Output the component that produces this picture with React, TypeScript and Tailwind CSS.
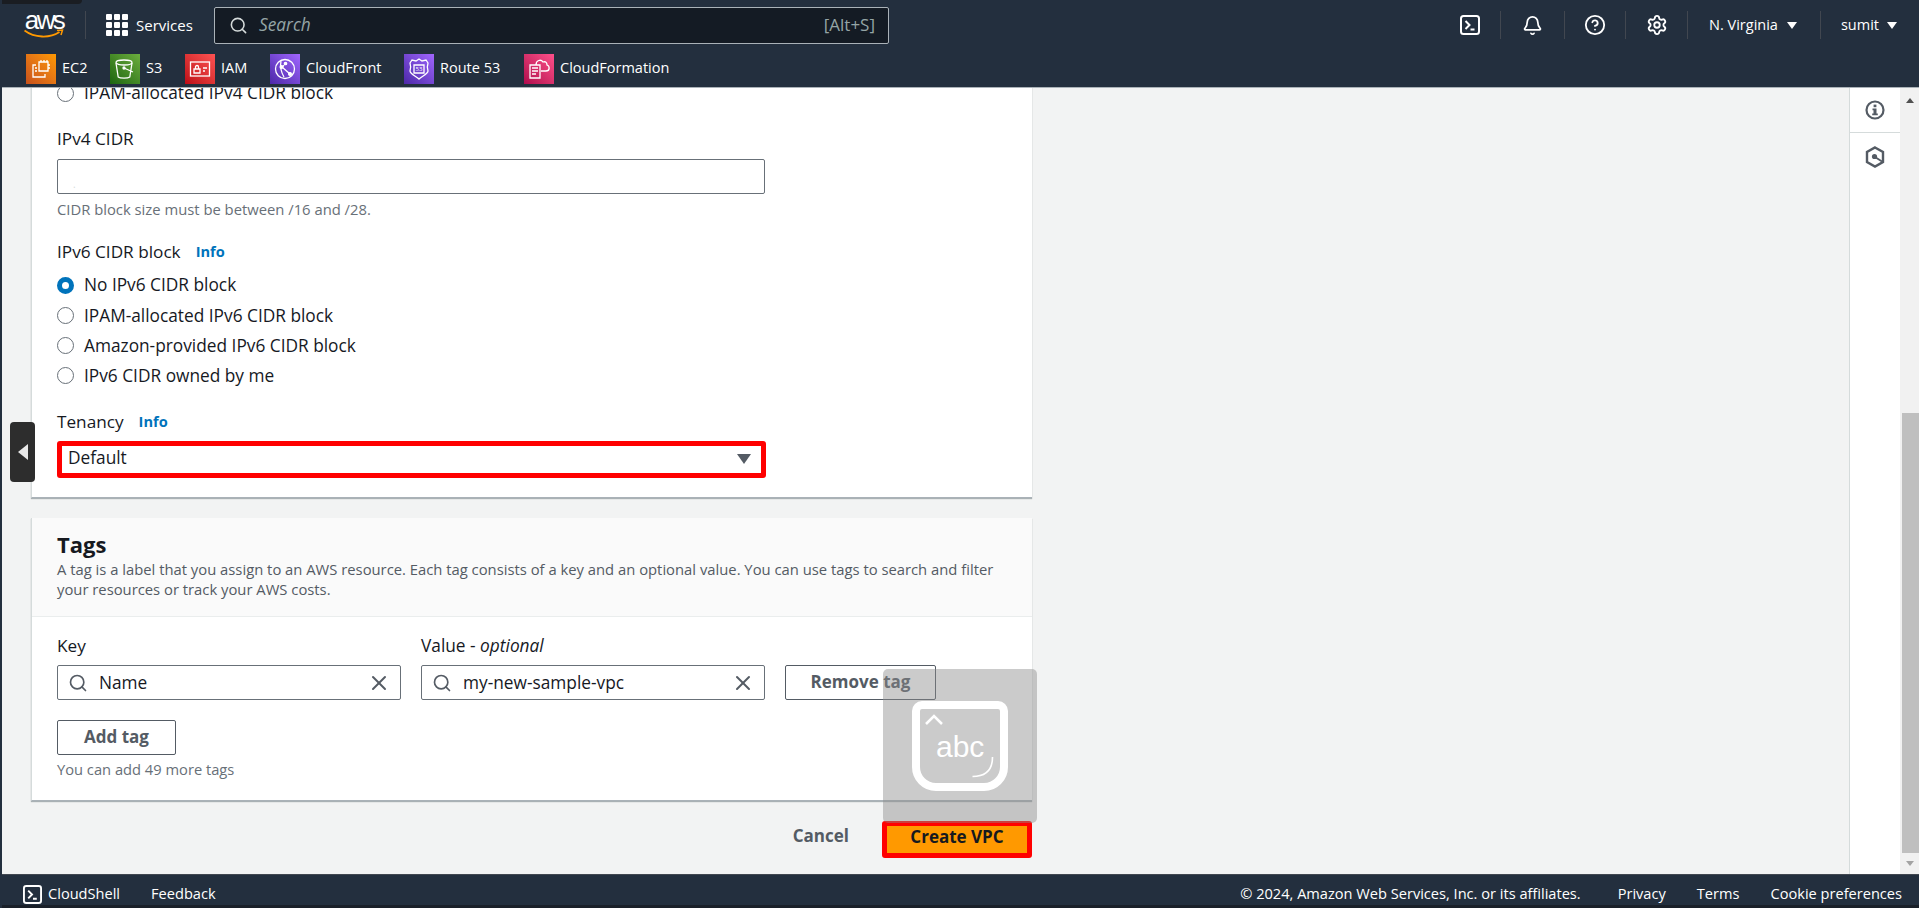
import { Bell, CircleHelp, Search, Settings, X } from 'lucide-react';

const font = 'font-["Open_Sans","Noto_Sans",sans-serif]';

function TerminalIcon({ size = 20 }: { size?: number }) {
  return (
    <svg width={size} height={size} viewBox="0 0 20 20" fill="none" stroke="white" strokeWidth="2">
      <rect x="1" y="1" width="18" height="18" rx="2.5" />
      <path d="M5.5 6l4 4-4 4M10.5 14.5h4" />
    </svg>
  );
}

function AwsLogo() {
  return (
    <div className="flex flex-col items-center w-[38px] h-[26px]">
      <span className="text-white text-[26px] leading-[17px] font-['Liberation_Sans',sans-serif] tracking-[-2.6px]">aws</span>
      <svg width="40" height="9" viewBox="0 0 40 9" fill="none" className="shrink-0">
        <path d="M0.5 1.5c10 7.5 25 8 35 1.5" stroke="#ff9900" strokeWidth="1.8" />
        <path d="M33 1.5l5.5-.5-1.5 5" stroke="#ff9900" strokeWidth="1.5" />
      </svg>
    </div>
  );
}

function Shortcut({ label, tile, width, children }: { label: string; tile: string; width: string; children: React.ReactNode }) {
  return (
    <div className={`flex items-center gap-[6px] ${width}`}>
      <div className={`w-[30px] h-[30px] flex items-center justify-center shrink-0 ${tile}`}>
        <svg width="24" height="24" viewBox="0 0 24 24" fill="none" stroke="white" strokeWidth="1.3">
          {children}
        </svg>
      </div>
      <span className="text-white text-[14.5px] leading-[20px] mt-[-2px]">{label}</span>
    </div>
  );
}

function NavDivider() {
  return <div className="w-px h-[28px] bg-[#414750] shrink-0" />;
}

function Caret() {
  return <div className="w-0 h-0 border-x-[5px] border-x-transparent border-t-[7px] border-t-white" />;
}

function TopNav() {
  return (
    <header className="bg-[#232f3e] h-[88px] shrink-0 border-b border-[#aab2b8] relative">
      <div className="absolute left-0 top-0 w-[80px] h-[4px] bg-[#1a1d22] rounded-br" />
      <div className="flex items-center h-[50px] pl-[23px] pr-[22px]">
        <AwsLogo />
        <div className="w-[22px]" />
        <NavDivider />
        <div className="grid grid-cols-3 gap-[2px] ml-[20px]">
          {Array.from({ length: 9 }).map((_, i) => (
            <div key={i} className="w-[6px] h-[6px] bg-white rounded-[1px]" />
          ))}
        </div>
        <span className="text-white text-[15px] ml-[8px] w-[57px]">Services</span>
        <div className="ml-[21px] w-[675px] h-[37px] bg-[#141b24] border border-[#aab2b8] rounded-[2px] flex items-center pl-[14px] pr-[13px]">
          <Search size={19} color="#d5dbdb" strokeWidth={2} />
          <span className="italic text-[#95a5a6] text-[17.3px] ml-[11px]">Search</span>
          <span className="ml-auto text-[#95a5a6] text-[17px]">[Alt+S]</span>
        </div>
        <div className="ml-auto flex items-center">
          <TerminalIcon />
          <div className="w-[20px]" />
          <NavDivider />
          <div className="w-[63px] flex justify-center"><Bell size={21} color="white" strokeWidth={2} /></div>
          <NavDivider />
          <div className="w-[60px] flex justify-center"><CircleHelp size={22} color="white" strokeWidth={2} /></div>
          <NavDivider />
          <div className="w-[61px] flex justify-center"><Settings size={22} color="white" strokeWidth={2} /></div>
          <NavDivider />
          <span className="text-white text-[14.5px] ml-[21px]">N. Virginia</span>
          <div className="ml-[9px]"><Caret /></div>
          <div className="w-[23px]" />
          <NavDivider />
          <span className="text-white text-[14.5px] ml-[20px]">sumit</span>
          <div className="ml-[8px]"><Caret /></div>
        </div>
      </div>
      <div className="flex items-center h-[30px] mt-[4px] pl-[24px]">
        <Shortcut label="EC2" width="w-[84px]" tile="bg-gradient-to-tr from-[#c8511b] to-[#ff9900]">
          <path d="M10 5h9v9h-9z" />
          <path d="M12 3v2M15 3v2M18 3v2M19 8h2M19 11h2M7 8H4v12h12v-3" />
          <path d="M8 11H6M8 14H6" />
        </Shortcut>
        <Shortcut label="S3" width="w-[75px]" tile="bg-gradient-to-tr from-[#1b660f] to-[#6cae3e]">
          <ellipse cx="11" cy="5.5" rx="8" ry="2.5" />
          <path d="M3 6l2.2 14c2 1.5 9.6 1.5 11.6 0L19 6M11 11l9 4" />
          <circle cx="11" cy="11" r="1" fill="white" />
        </Shortcut>
        <Shortcut label="IAM" width="w-[85px]" tile="bg-gradient-to-tr from-[#bd0816] to-[#ff5252]">
          <rect x="2.5" y="5" width="19" height="14" />
          <path d="M6 12h6v4H6zM7.5 12v-2a1.5 1.5 0 013 0v2M15 11h4M15 14h2" />
        </Shortcut>
        <Shortcut label="CloudFront" width="w-[134px]" tile="bg-gradient-to-tr from-[#4d27a8] to-[#a166ff]">
          <circle cx="12" cy="12" r="9.5" />
          <path d="M8 4c-1 5 0 11 3 16M9 10l8 7M9 11l2-3" />
          <circle cx="8.5" cy="10" r="1.4" fill="white" />
          <circle cx="12.5" cy="6.5" r="1.2" fill="white" />
          <circle cx="17" cy="17" r="1.4" fill="white" />
        </Shortcut>
        <Shortcut label="Route 53" width="w-[120px]" tile="bg-gradient-to-tr from-[#4d27a8] to-[#a166ff]">
          <path d="M12 2l3 2 4-1 2 3c-1 3-1 5 0 8 0 3-6 5-9 8-3-3-9-5-9-8 1-3 1-5 0-8l2-3 4 1z" />
          <path d="M7 8h10v8H7z" />
          <text x="12" y="14.2" textAnchor="middle" fontSize="6" fill="white" stroke="none">53</text>
        </Shortcut>
        <Shortcut label="CloudFormation" width="w-[140px]" tile="bg-gradient-to-tr from-[#b0084d] to-[#ff4f8b]">
          <path d="M3 8h10v13H3zM5 11h6M5 14h6M5 17h4" />
          <path d="M9 8c0-5 5-6 7-3 3-1 4 1 4 3 3 1 3 6-1 6h-5" />
        </Shortcut>
      </div>
    </header>
  );
}

function Radio({ label, checked }: { label: string; checked?: boolean }) {
  return (
    <div className="flex items-center h-[30.2px]">
      <div className={`w-[17px] h-[17px] rounded-full shrink-0 ${checked ? 'border-[5px] border-[#0073bb]' : 'border border-[#687078]'}`} />
      <span className="ml-[10px] text-[17.3px] text-[#16191f]">{label}</span>
    </div>
  );
}

function FieldLabel({ label, info }: { label: string; info?: boolean }) {
  return (
    <div className="flex items-center h-[24px] text-[17.2px] text-[#16191f]">
      {label}
      {info && <span className="ml-[15px] text-[14.6px] font-bold text-[#0073bb]">Info</span>}
    </div>
  );
}

function TagInput({ value }: { value: string }) {
  return (
    <div className="flex-1 h-[35px] border border-[#687078] rounded-[2px] flex items-center pl-[10px] pr-[9px] bg-white">
      <Search size={20} color="#545b64" strokeWidth={2} />
      <span className="ml-[11px] text-[17.3px] text-[#16191f]">{value}</span>
      <X size={24} color="#545b64" strokeWidth={2} className="ml-auto" />
    </div>
  );
}

function KeyboardOverlay() {
  return (
    <div className="absolute left-[881px] top-[581px] w-[154px] h-[154px] bg-[#8c8c8c]/45 rounded-[5px] flex items-center justify-center">
      <div className="w-[96px] h-[90px] border-[8px] border-white rounded-t-[10px] rounded-b-[24px] relative">
        <svg className="absolute left-[4px] top-[3px]" width="20" height="14" viewBox="0 0 20 14" fill="none" stroke="white" strokeWidth="2.5">
          <path d="M2 12l8-8 8 8" />
        </svg>
        <span className="absolute left-[16px] top-[22px] text-white text-[30px] leading-[32px] font-['Liberation_Sans',sans-serif]">abc</span>
        <svg className="absolute right-[6px] bottom-[5px]" width="22" height="21" viewBox="0 0 22 21" fill="none" stroke="white" strokeWidth="1.6">
          <path d="M20.5 0c0 12-6 19.500-20 19.500" />
        </svg>
      </div>
    </div>
  );
}

function SidePanel() {
  return (
    <aside className="w-[51px] shrink-0 bg-white border-l border-[#d5dbdb] flex flex-col">
      <div className="h-[45px] flex items-center justify-center border-b border-[#d5dbdb]">
        <svg width="20" height="20" viewBox="0 0 20 20" fill="none">
          <circle cx="10" cy="10" r="8.5" stroke="#545b64" strokeWidth="2.2" />
          <rect x="8.6" y="4.6" width="2.8" height="2.6" fill="#545b64" />
          <path d="M7.5 8.600h4v5h1.300v1.600H7.200v-1.600h1.300v-3.400h-1z" fill="#545b64" />
        </svg>
      </div>
      <div className="h-[47px] flex items-center justify-center">
        <svg width="20" height="22" viewBox="0 0 20 22" fill="none" stroke="#545b64" strokeWidth="2.4">
          <path d="M10 1.500l8 4.500v10l-8 4.500-8-4.500V6z" />
          <circle cx="9.500" cy="10.500" r="2.600" fill="#545b64" stroke="none" />
          <path d="M10 11l7 4.500" strokeWidth="1.800" />
        </svg>
      </div>
    </aside>
  );
}

function Scrollbar() {
  return (
    <div className="w-[19px] shrink-0 bg-[#f1f1f1] flex flex-col">
      <div className="h-[24px] flex items-center justify-center">
        <div className="w-0 h-0 border-x-[4px] border-x-transparent border-b-[5px] border-b-[#505050]" />
      </div>
      <div className="flex-1 flex flex-col justify-end">
        <div className="h-[440px] ml-[2px] bg-[#bfbfbf]" />
      </div>
      <div className="h-[21px] flex items-center justify-center">
        <div className="w-0 h-0 border-x-[4px] border-x-transparent border-t-[5px] border-t-[#a3a3a3]" />
      </div>
    </div>
  );
}

function VpcSettingsCard() {
  return (
    <section className="bg-white h-[420px] border-l border-[#d5dbdb] border-b border-b-[#aab2b8] shadow-[0_1px_1px_rgba(0,28,36,0.3)] mt-[-10px] pl-[25px] overflow-hidden">
      <div className="w-[709px]">
        <Radio label="IPAM-allocated IPv4 CIDR block" />
        <div className="mt-[19px]"><FieldLabel label="IPv4 CIDR" /></div>
        <div className="mt-[8px] h-[35px] w-[708px] border border-[#687078] rounded-[2px] pl-[15px] flex items-end pb-[4px] text-[10px] leading-[10px] text-[#d5dbdb]">.</div>
        <p className="mt-[5px] text-[14.8px] leading-[20px] text-[#687078]">CIDR block size must be between /16 and /28.</p>
        <div className="mt-[21px]"><FieldLabel label="IPv6 CIDR block" info /></div>
        <div className="mt-[6px]">
          <Radio label="No IPv6 CIDR block" checked />
          <Radio label="IPAM-allocated IPv6 CIDR block" />
          <Radio label="Amazon-provided IPv6 CIDR block" />
          <Radio label="IPv6 CIDR owned by me" />
        </div>
        <div className="mt-[19px]"><FieldLabel label="Tenancy" info /></div>
        <div className="mt-[7px] h-[37px] border-[5px] border-[#ff0000] rounded-[3px] flex items-center pl-[6px] pr-[10px]">
          <span className="text-[17.3px] leading-[24px] mt-[-3px] text-[#16191f]">Default</span>
          <div className="ml-auto w-0 h-0 border-x-[7px] border-x-transparent border-t-[10px] border-t-[#545b64]" />
        </div>
      </div>
    </section>
  );
}

function TagsCard() {
  return (
    <section className="mt-[20px] bg-white h-[283px] border-l border-[#d5dbdb] border-b border-b-[#aab2b8] shadow-[0_1px_1px_rgba(0,28,36,0.3)]">
      <div className="bg-[#fafafa] h-[99px] border-b border-[#eaeded] pl-[25px] pr-[30px] pt-[13px]">
        <h2 className="text-[22px] leading-[26px] font-bold text-[#16191f]">Tags</h2>
        <p className="mt-[2px] text-[14.8px] leading-[20px] text-[#545b64]">
          A tag is a label that you assign to an AWS resource. Each tag consists of a key and an optional value. You can use tags to search and filter your resources or track your AWS costs.
        </p>
      </div>
      <div className="pl-[25px] pt-[17px]">
        <div className="flex gap-[20px] items-end">
          <div className="flex flex-col gap-[7px] w-[344px]">
            <FieldLabel label="Key" />
            <div className="flex"><TagInput value="Name" /></div>
          </div>
          <div className="flex flex-col gap-[7px] w-[344px]">
            <div className="flex items-center h-[24px] text-[17.3px] text-[#16191f]">Value -&nbsp;<i>optional</i></div>
            <div className="flex"><TagInput value="my-new-sample-vpc" /></div>
          </div>
          <div className="w-[151px] h-[35px] border border-[#545b64] rounded-[2px] flex items-center justify-center pb-[2px] text-[17px] font-bold text-[#545b64]">Remove tag</div>
        </div>
        <div className="mt-[20px] w-[119px] h-[35px] border border-[#545b64] rounded-[2px] flex items-center justify-center pb-[2px] text-[17px] font-bold text-[#545b64]">Add tag</div>
        <p className="mt-[4px] text-[14.7px] leading-[20px] text-[#687078]">You can add 49 more tags</p>
      </div>
    </section>
  );
}

function Footer() {
  return (
    <footer className="shrink-0 h-[34px] bg-[#232f3e] border-t border-[#414750] border-b-[3px] border-b-[#1a2029] flex items-center text-white text-[14.6px] pl-[21px] pr-[17px] pt-[8px]">
      <TerminalIcon size={19} />
      <span className="ml-[6px]">CloudShell</span>
      <span className="ml-[31px]">Feedback</span>
      <span className="ml-auto">© 2024, Amazon Web Services, Inc. or its affiliates.</span>
      <span className="ml-[37px]">Privacy</span>
      <span className="ml-[31px]">Terms</span>
      <span className="ml-[31px]">Cookie preferences</span>
    </footer>
  );
}

export default function App() {
  return (
    <div className={`h-[908px] w-[1919px] overflow-hidden flex flex-col border-l-2 border-l-[#232f3e] ${font}`}>
      <TopNav />
      <main className="flex-1 flex min-h-0 bg-[#f2f3f3] relative overflow-hidden">
        <div className="flex-1 min-w-0 pl-[29px] pr-[817px]">
          <VpcSettingsCard />
          <TagsCard />
          <div className="flex items-center justify-end h-[37px] mt-[20px]">
            <span className="text-[17px] leading-[24px] mt-[-7px] font-bold text-[#545b64] mr-[33px]">Cancel</span>
            <div className="w-[150px] h-[37px] bg-[#ff9900] border-[5px] border-[#ff0000] rounded-[3px] flex items-center justify-center pb-[5px] text-[17px] font-bold text-[#16191f]">Create VPC</div>
          </div>
        </div>
        <SidePanel />
        <Scrollbar />
        <div className="absolute left-[8px] top-[334px] w-[25px] h-[60px] bg-[#2d2d2d] rounded-[4px] flex items-center justify-center">
          <div className="w-0 h-0 border-y-[8px] border-y-transparent border-r-[10px] border-r-[#e8e8e8]" />
        </div>
        <KeyboardOverlay />
      </main>
      <Footer />
    </div>
  );
}
